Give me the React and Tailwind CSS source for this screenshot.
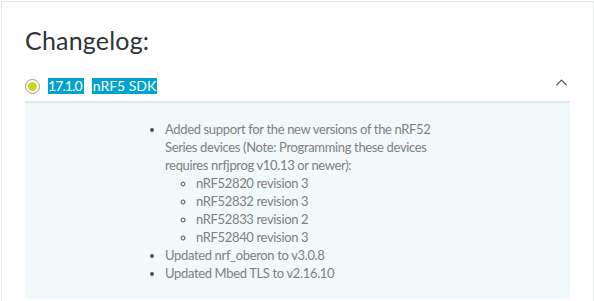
import { ChevronUp } from "lucide-react";

const subItems = [
  "nRF52820 revision 3",
  "nRF52832 revision 3",
  "nRF52833 revision 2",
  "nRF52840 revision 3",
];

export default function App() {
  return (
    <div
      className="w-[594px] h-[301px] overflow-hidden bg-white pl-px pt-px"
      style={{ fontFamily: "Lato, 'Open Sans', sans-serif" }}
    >
      <div className="h-full border-l border-t border-r border-[#e6e9ea] px-[23px] pt-[22px]">
        <h1 className="text-[25px] leading-[32px] text-[#2e3338] tracking-[0.2px]">
          Changelog:
        </h1>

        <div className="mt-[15px] h-[30px] flex items-center">
          <span className="w-[15px] h-[15px] rounded-full border border-[#9a9a9a] flex items-center justify-center bg-white">
            <span className="w-[9px] h-[9px] rounded-full bg-[#cbd61c]" />
          </span>
          <span className="ml-[8px] bg-[#00a3cc] text-white text-[14px] leading-[16px] tracking-[-0.9px] pr-[2px]">
            17.1.0
          </span>
          <span className="ml-[8px] bg-[#00a3cc] text-white text-[14px] leading-[16px] px-px">
            nRF5 SDK
          </span>
          <ChevronUp
            className="ml-auto mr-[-1px] mb-[7px] text-[#3f4a55]"
            size={19}
            strokeWidth={1.4}
          />
        </div>

        <div className="border-t-2 border-[#e2e5e7] bg-[#f2f9fb] pt-[17px] pb-[17px] pl-[140px]">
          <ul className="w-[320px] list-disc text-[13px] leading-[18px] tracking-[-0.35px] text-[#808080] marker:text-[#4d4d4d]">
            <li>
              Added support for the new versions of the nRF52
              <br />
              Series devices (Note: Programming these devices
              <br />
              requires nrfjprog v10.13 or newer):
              <ul className="list-[circle] pl-[31px]">
                {subItems.map((item) => (
                  <li key={item}>{item}</li>
                ))}
              </ul>
            </li>
            <li>Updated nrf_oberon to v3.0.8</li>
            <li>Updated Mbed TLS to v2.16.10</li>
          </ul>
        </div>
      </div>
    </div>
  );
}
